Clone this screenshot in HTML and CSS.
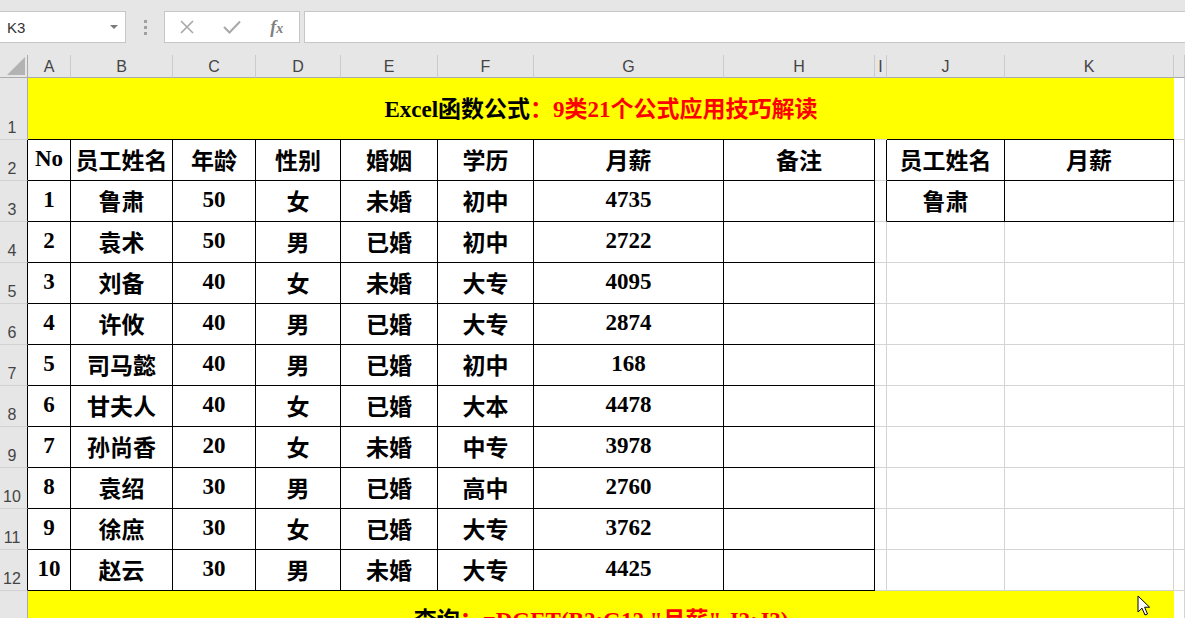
FILE: index.html
```html
<!DOCTYPE html>
<html lang="zh-CN">
<head>
<meta charset="utf-8">
<title>Excel</title>
<link rel="stylesheet" href="styles.css">
</head>
<body>
<div class="toolbar">
  <div class="namebox"><span>K3</span><span class="dd"></span></div>
  <div class="grip"><i></i><i></i><i></i></div>
  <div class="fxbox">
    <span class="slot"><svg width="14" height="14" viewBox="0 0 14 14"><path d="M1 1L13 13M13 1L1 13" stroke="#a8a8a8" stroke-width="1.6" fill="none"/></svg></span>
    <span class="slot"><svg width="18" height="14" viewBox="0 0 18 14"><path d="M1 7L6.5 12.5L17 1.5" stroke="#a8a8a8" stroke-width="2" fill="none"/></svg></span>
    <span class="slot fx"><i>f</i><i class="x">x</i></span>
  </div>
  <div class="input"></div>
</div>

<div class="sheet">
  <div class="corner"><svg width="18" height="18" viewBox="0 0 18 18"><path d="M18 0L18 18L0 18Z" fill="#b3b3b3"/></svg></div>
  <div class="ch">A</div><div class="ch">B</div><div class="ch">C</div><div class="ch">D</div><div class="ch">E</div><div class="ch">F</div><div class="ch">G</div><div class="ch">H</div><div class="ch">I</div><div class="ch">J</div><div class="ch">K</div><div class="ch"></div>

  <div class="rh">1</div>
  <div class="title"><span>Excel函数公式</span><span class="red">：9类21个公式应用技巧解读</span></div>
  <div class="c"></div>

  <div class="rh k">2</div>
  <div class="t">No</div><div class="t">员工姓名</div><div class="t">年龄</div><div class="t">性别</div><div class="t">婚姻</div><div class="t">学历</div><div class="t">月薪</div><div class="t">备注</div>
  <div class="c kr"></div><div class="t">员工姓名</div><div class="t">月薪</div><div class="c"></div>

  <div class="rh k">3</div>
  <div class="t">1</div><div class="t">鲁肃</div><div class="t">50</div><div class="t">女</div><div class="t">未婚</div><div class="t">初中</div><div class="t">4735</div><div class="t"></div>
  <div class="c kr"></div><div class="t">鲁肃</div><div class="t"></div><div class="c"></div>

  <div class="rh k">4</div>
  <div class="t">2</div><div class="t">袁术</div><div class="t">50</div><div class="t">男</div><div class="t">已婚</div><div class="t">初中</div><div class="t">2722</div><div class="t"></div>
  <div class="c"></div><div class="c"></div><div class="c"></div><div class="c"></div>

  <div class="rh k">5</div>
  <div class="t">3</div><div class="t">刘备</div><div class="t">40</div><div class="t">女</div><div class="t">未婚</div><div class="t">大专</div><div class="t">4095</div><div class="t"></div>
  <div class="c"></div><div class="c"></div><div class="c"></div><div class="c"></div>

  <div class="rh k">6</div>
  <div class="t">4</div><div class="t">许攸</div><div class="t">40</div><div class="t">男</div><div class="t">已婚</div><div class="t">大专</div><div class="t">2874</div><div class="t"></div>
  <div class="c"></div><div class="c"></div><div class="c"></div><div class="c"></div>

  <div class="rh k">7</div>
  <div class="t">5</div><div class="t">司马懿</div><div class="t">40</div><div class="t">男</div><div class="t">已婚</div><div class="t">初中</div><div class="t">168</div><div class="t"></div>
  <div class="c"></div><div class="c"></div><div class="c"></div><div class="c"></div>

  <div class="rh k">8</div>
  <div class="t">6</div><div class="t">甘夫人</div><div class="t">40</div><div class="t">女</div><div class="t">已婚</div><div class="t">大本</div><div class="t">4478</div><div class="t"></div>
  <div class="c"></div><div class="c"></div><div class="c"></div><div class="c"></div>

  <div class="rh k">9</div>
  <div class="t">7</div><div class="t">孙尚香</div><div class="t">20</div><div class="t">女</div><div class="t">未婚</div><div class="t">中专</div><div class="t">3978</div><div class="t"></div>
  <div class="c"></div><div class="c"></div><div class="c"></div><div class="c"></div>

  <div class="rh k">10</div>
  <div class="t">8</div><div class="t">袁绍</div><div class="t">30</div><div class="t">男</div><div class="t">已婚</div><div class="t">高中</div><div class="t">2760</div><div class="t"></div>
  <div class="c"></div><div class="c"></div><div class="c"></div><div class="c"></div>

  <div class="rh k">11</div>
  <div class="t">9</div><div class="t">徐庶</div><div class="t">30</div><div class="t">女</div><div class="t">已婚</div><div class="t">大专</div><div class="t">3762</div><div class="t"></div>
  <div class="c"></div><div class="c"></div><div class="c"></div><div class="c"></div>

  <div class="rh k">12</div>
  <div class="t">10</div><div class="t">赵云</div><div class="t">30</div><div class="t">男</div><div class="t">未婚</div><div class="t">大专</div><div class="t">4425</div><div class="t"></div>
  <div class="c"></div><div class="c"></div><div class="c"></div><div class="c"></div>

  <div class="rh">13</div>
  <div class="foot"><span>查询</span><span class="red">：=DGET(B2:G12,"月薪",J2:J3)</span></div>
  <div class="c"></div>
</div>

<svg class="cursor" width="14" height="21" viewBox="0 0 14 21"><path d="M1 1L1 17L5 13.2L8 20L10.5 19L7.6 12.2L12.6 12.2Z" fill="#fff" stroke="#000" stroke-width="1" stroke-linejoin="round"/></svg>
</body>
</html>
```

FILE: styles.css
```css
* { box-sizing: border-box; margin: 0; padding: 0; }
html, body { width: 1185px; height: 618px; overflow: hidden; background: #fff; }
body { font-family: "Liberation Sans", Arial, sans-serif; position: relative; }

.toolbar { height: 55px; background: #e6e6e6; display: flex; align-items: flex-start; padding-top: 11px; }
.namebox { width: 126px; height: 32px; background: #fff; border: 1px solid #c6c6c6; border-left: none; display: flex; align-items: center; justify-content: space-between; padding: 0 7px 0 7px; font-size: 15px; color: #333; }
.dd { width: 0; height: 0; border-left: 4px solid transparent; border-right: 4px solid transparent; border-top: 4px solid #7a7a7a; }
.grip { width: 38px; height: 32px; display: flex; flex-direction: column; align-items: center; justify-content: center; gap: 3px; }
.grip i { width: 3px; height: 3px; background: #a0a0a0; display: block; }
.fxbox { width: 136px; height: 32px; background: #fff; border: 1px solid #c6c6c6; display: flex; align-items: center; }
.slot { width: 45px; height: 30px; display: flex; align-items: center; justify-content: center; }
.fx { font-family: "Liberation Serif", serif; color: #808080; font-size: 18px; font-weight: bold; }
.fx .x { font-size: 14px; margin-top: 4px; }
.input { flex: 1; height: 32px; margin-left: 4px; background: #fff; border: 1px solid #c6c6c6; border-right: none; }

.sheet { display: grid; grid-template-columns: 28px 43px 102px 83px 85px 97px 96px 190px 151px 12px 118px 169px 1fr; grid-template-rows: 23px 62px repeat(11, 41px) 62px; }
.corner { background: #e6e6e6; border-right: 1px solid #ababab; border-bottom: 1px solid #ababab; display: flex; align-items: flex-end; justify-content: flex-end; padding: 0 2px 2px 0; }
.ch { background: #e6e6e6; border-bottom: 1px solid #ababab; border-right: 1px solid #cbcbcb; font-size: 16px; color: #444; text-align: center; line-height: 22px; padding-top: 1px; }
.rh { background: #e6e6e6; border-right: 1px solid #ababab; border-bottom: 1px solid #d2d2d2; font-size: 16px; color: #444; display: flex; align-items: flex-end; justify-content: center; padding: 0 3px 1px 0; line-height: 20px; }
.rh.k { border-right-color: #000; }

.c { border-right: 1px solid #d4d4d4; border-bottom: 1px solid #d4d4d4; }
.c.kr { border-right-color: #000; }
.t { border-right: 1px solid #000; border-bottom: 1px solid #000; display: flex; align-items: center; justify-content: center; font-family: "Liberation Serif", "Noto Sans CJK SC", serif; font-weight: bold; font-size: 23px; color: #000; white-space: nowrap; padding-bottom: 2px; }

.title, .foot { grid-column: 2 / 13; background: #ffff00; display: flex; align-items: center; justify-content: center; font-family: "Liberation Serif", "Noto Sans CJK SC", serif; font-weight: bold; font-size: 23px; color: #000; white-space: nowrap; }
.title { background: linear-gradient(to right, #000 0 847px, #d4d4d4 847px 859px, #000 859px) left bottom / 100% 1px no-repeat, #ffff00; padding-bottom: 4px; }
.foot { padding-bottom: 8px; }
.red { color: #ff0000; }

.cursor { position: absolute; left: 1137px; top: 595px; }
```
